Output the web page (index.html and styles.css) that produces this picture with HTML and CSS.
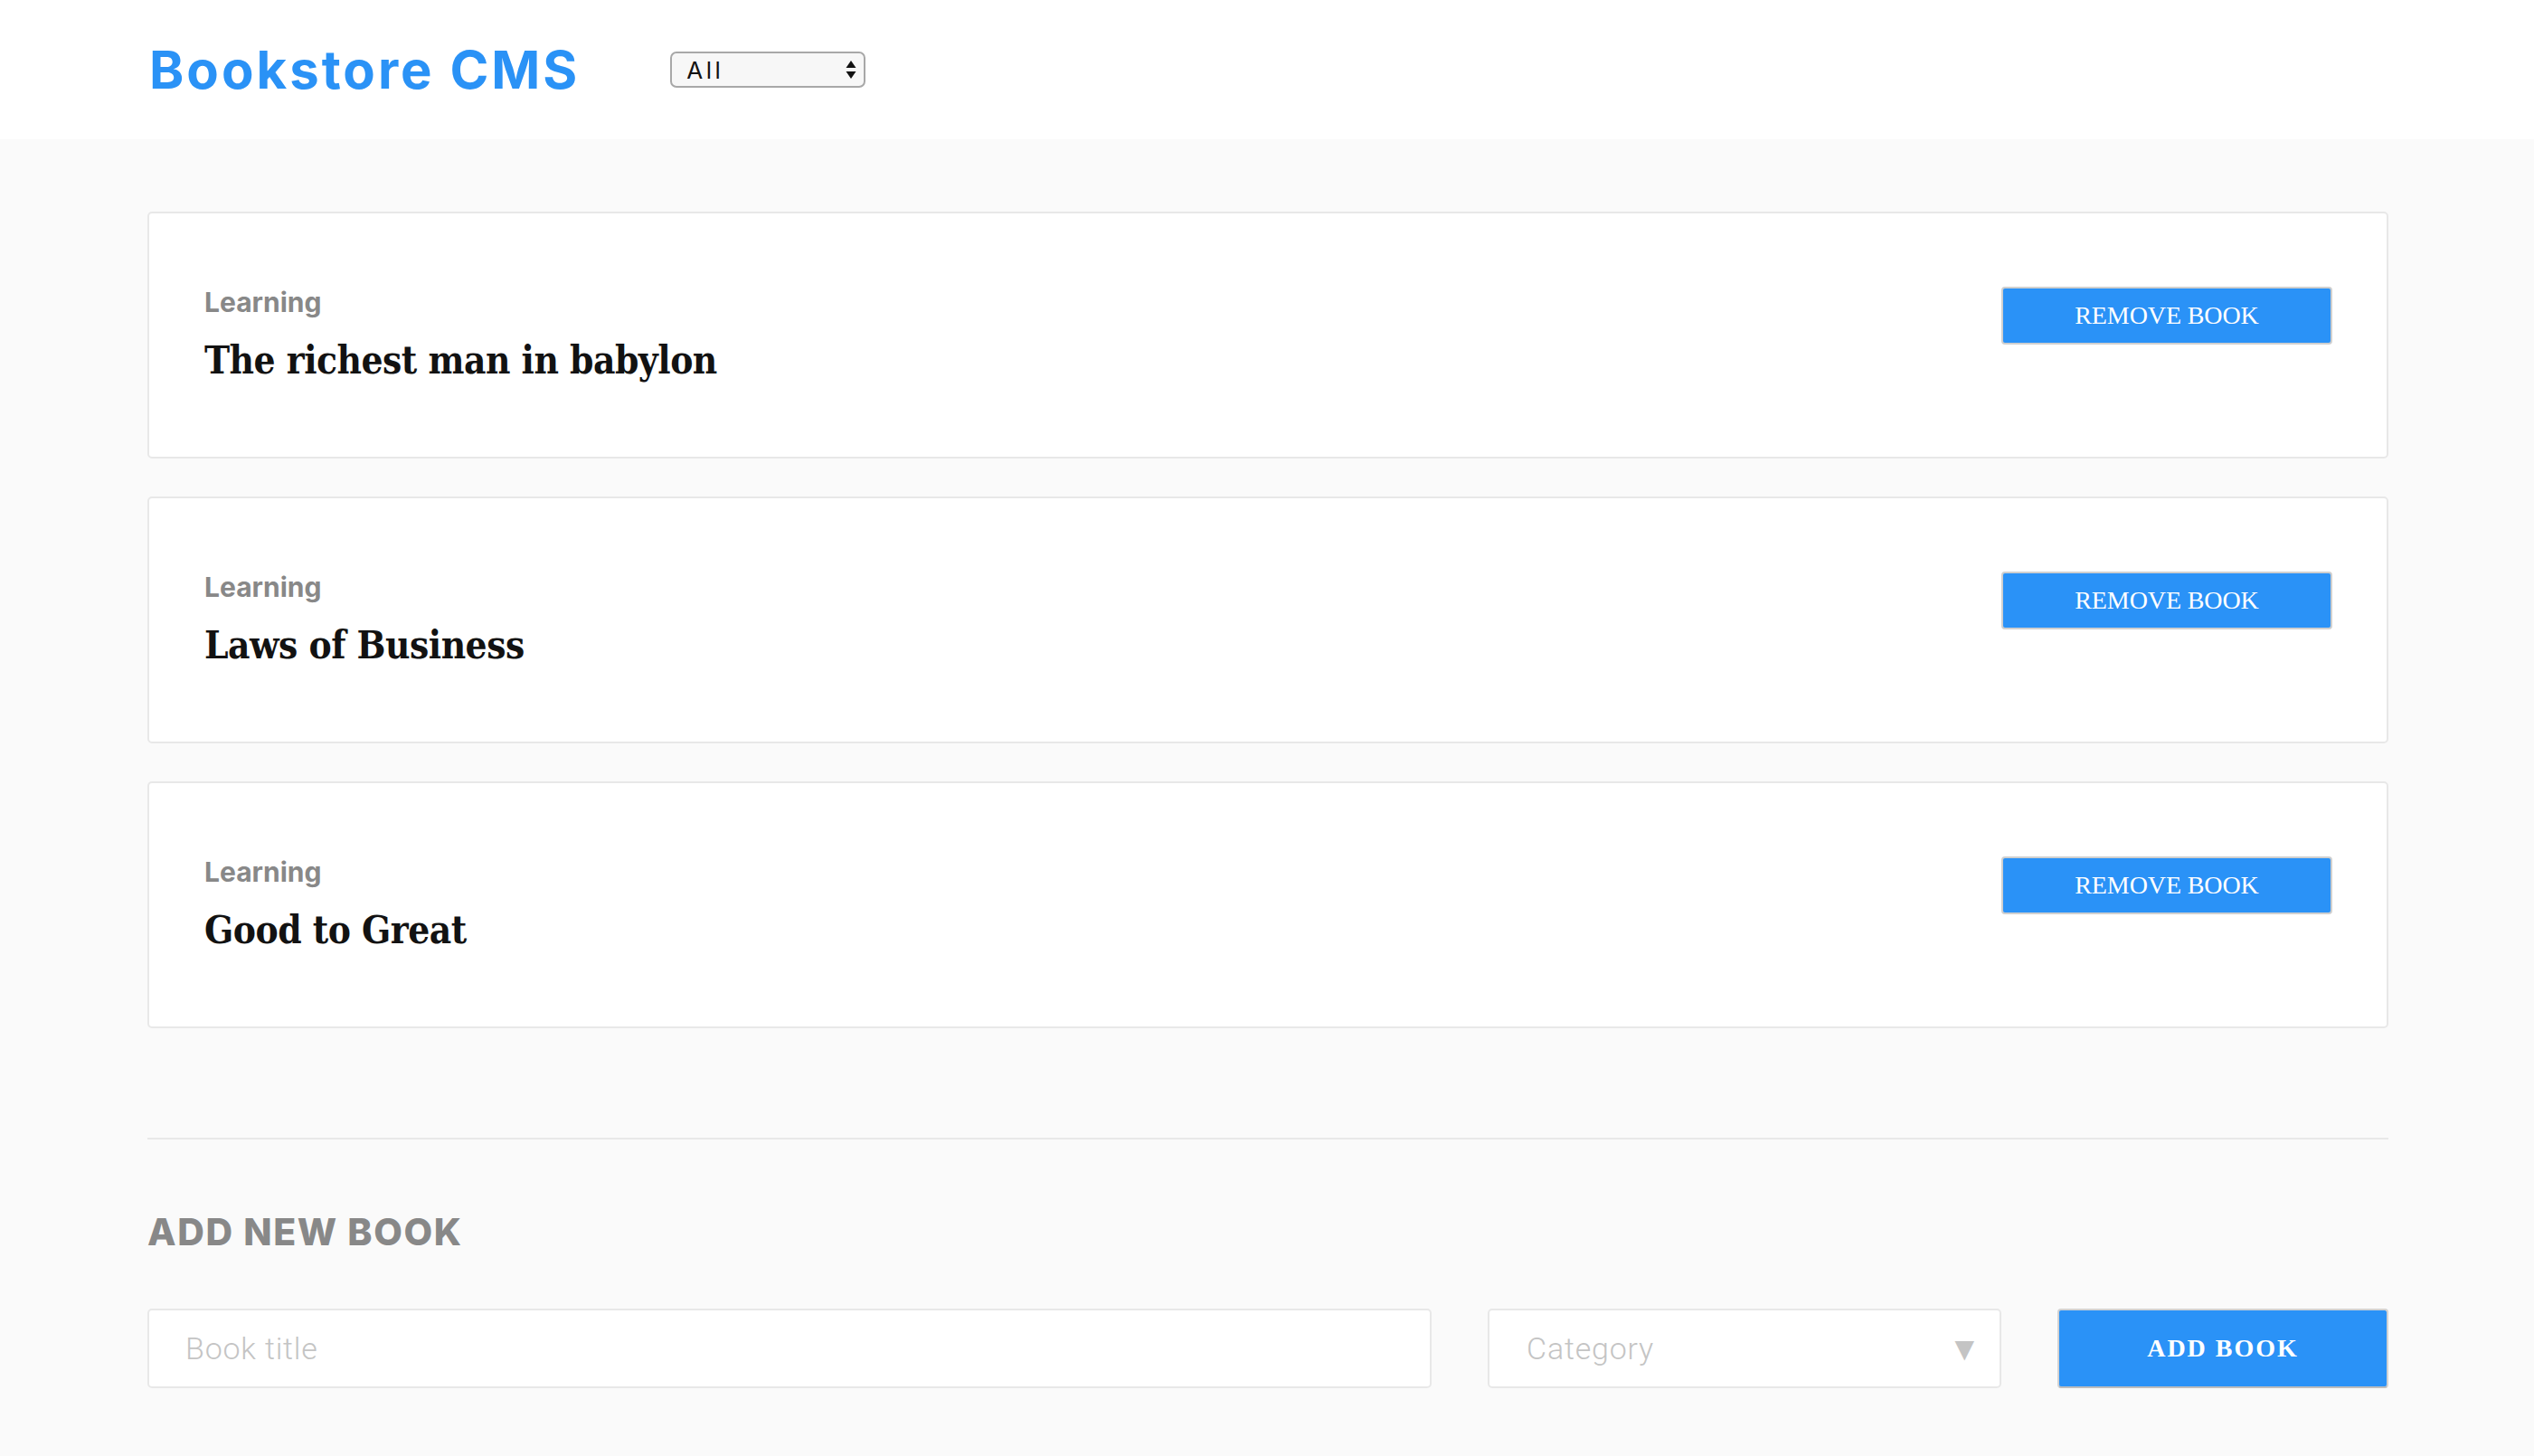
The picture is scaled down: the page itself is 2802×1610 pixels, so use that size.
FILE: index.html
```html
<!DOCTYPE html>
<html lang="en">
<head>
<meta charset="utf-8">
<title>Bookstore CMS</title>
<link rel="stylesheet" href="styles.css">
</head>
<body>
<header class="topbar">
  <h1 class="logo">Bookstore CMS</h1>
  <div class="filter">
    <span class="filter-value">All</span>
    <span class="filter-arrows">
      <svg width="12" height="22" viewBox="0 0 12 22"><path d="M6 1 L11.5 9 L0.5 9 Z" fill="#111"/><path d="M0.5 13 L11.5 13 L6 21 Z" fill="#111"/></svg>
    </span>
  </div>
</header>

<main class="content">
  <section class="book-list">
    <article class="book-card">
      <div class="book-info">
        <p class="book-category">Learning</p>
        <h2 class="book-title">The richest man in babylon</h2>
      </div>
      <button class="remove-btn" type="button">REMOVE BOOK</button>
    </article>
    <article class="book-card">
      <div class="book-info">
        <p class="book-category">Learning</p>
        <h2 class="book-title">Laws of Business</h2>
      </div>
      <button class="remove-btn" type="button">REMOVE BOOK</button>
    </article>
    <article class="book-card">
      <div class="book-info">
        <p class="book-category">Learning</p>
        <h2 class="book-title">Good to Great</h2>
      </div>
      <button class="remove-btn" type="button">REMOVE BOOK</button>
    </article>
  </section>

  <hr class="divider">

  <section class="add-book">
    <h3 class="add-heading">ADD NEW BOOK</h3>
    <form class="add-form">
      <input class="title-input" type="text" placeholder="Book title">
      <div class="category-select">
        <span class="category-placeholder">Category</span>
        <span class="category-arrow">&#9660;</span>
      </div>
      <button class="add-btn" type="button">ADD BOOK</button>
    </form>
  </section>
</main>
</body>
</html>
```
FILE: styles.css
```css
* { box-sizing: border-box; }

html, body {
  margin: 0;
  padding: 0;
}

body {
  background: #fafafa;
  font-family: "Inter", "Noto Sans", sans-serif;
  min-height: 1610px;
}

.topbar {
  background: #ffffff;
  height: 154px;
  display: flex;
  align-items: center;
  padding-left: 165px;
}

.logo {
  margin: 0;
  font-family: "Inter", sans-serif;
  font-weight: 700;
  font-size: 58px;
  line-height: 1;
  color: #2a92f6;
  letter-spacing: 3px;
}

.filter {
  margin-left: 100px;
  width: 216px;
  height: 40px;
  border: 2px solid #a8a8a8;
  border-radius: 7px;
  background: #f7f7f7;
  display: flex;
  align-items: center;
  justify-content: space-between;
  padding: 0 8px 0 16px;
}

.filter-value {
  font-family: "Inter", sans-serif;
  font-size: 26px;
  letter-spacing: 3.5px;
  color: #111;
}

.filter-arrows {
  display: flex;
  align-items: center;
}

.content {
  padding: 80px 161px 60px 163px;
}

.book-list {
  display: flex;
  flex-direction: column;
  gap: 42px;
}

.book-card {
  height: 273px;
  background: #ffffff;
  border: 2px solid #e8e8e8;
  border-radius: 5px;
  display: flex;
  justify-content: space-between;
  align-items: flex-start;
  padding: 0 60px 0 61px;
}

.book-info {
  padding-top: 80px;
}

.book-category {
  margin: 0;
  font-family: "Inter", sans-serif;
  font-weight: 700;
  font-size: 30px;
  line-height: 36px;
  color: #888888;
}

.book-title {
  margin: 23px 0 0;
  font-family: "DejaVu Serif Condensed", "DejaVu Serif", serif;
  font-weight: 700;
  font-size: 42px;
  line-height: 48px;
  letter-spacing: -0.5px;
  color: #121212;
}

.remove-btn {
  margin-top: 81px;
  width: 366px;
  height: 64px;
  background: #2a92f7;
  border: 2px solid #cfcfcf;
  border-radius: 4px;
  color: #ffffff;
  font-family: "Liberation Serif", serif;
  font-size: 28px;
  font-weight: 400;
  letter-spacing: -0.1px;
  padding: 0;
}

.divider {
  margin: 121px 0 0;
  border: 0;
  height: 2px;
  background: #e8e8e8;
}

.add-book {
  padding-top: 78px;
}

.add-heading {
  margin: 0;
  font-family: "Inter", sans-serif;
  font-weight: 800;
  font-size: 41px;
  line-height: 48px;
  letter-spacing: 1.6px;
  color: #888888;
}

.add-form {
  margin-top: 61px;
  display: flex;
  gap: 62px;
}

.title-input {
  flex: 1;
  height: 88px;
  background: #ffffff;
  border: 2px solid #e8e8e8;
  border-radius: 5px;
  padding: 0 40px;
  font-family: "Roboto", sans-serif;
  font-weight: 300;
  font-size: 34px;
  letter-spacing: 0.8px;
  color: #333;
  outline: none;
}

.title-input::placeholder {
  color: #c4c4c4;
}

.category-select {
  width: 568px;
  height: 88px;
  background: #ffffff;
  border: 2px solid #e8e8e8;
  border-radius: 5px;
  display: flex;
  align-items: center;
  justify-content: space-between;
  padding: 0 28px 0 41px;
}

.category-placeholder {
  font-family: "Roboto", sans-serif;
  font-weight: 300;
  font-size: 34px;
  letter-spacing: 0.8px;
  color: #c4c4c4;
}

.category-arrow {
  font-family: "DejaVu Sans", sans-serif;
  font-size: 28px;
  color: #c4c4c4;
}

.add-btn {
  width: 366px;
  height: 88px;
  background: #2a92f7;
  border: 2px solid #d2d2d2;
  border-bottom-color: #bdbdbd;
  border-radius: 4px;
  color: #ffffff;
  font-family: "Liberation Serif", serif;
  font-weight: 700;
  font-size: 28px;
  letter-spacing: 2px;
  padding: 0;
}
```
